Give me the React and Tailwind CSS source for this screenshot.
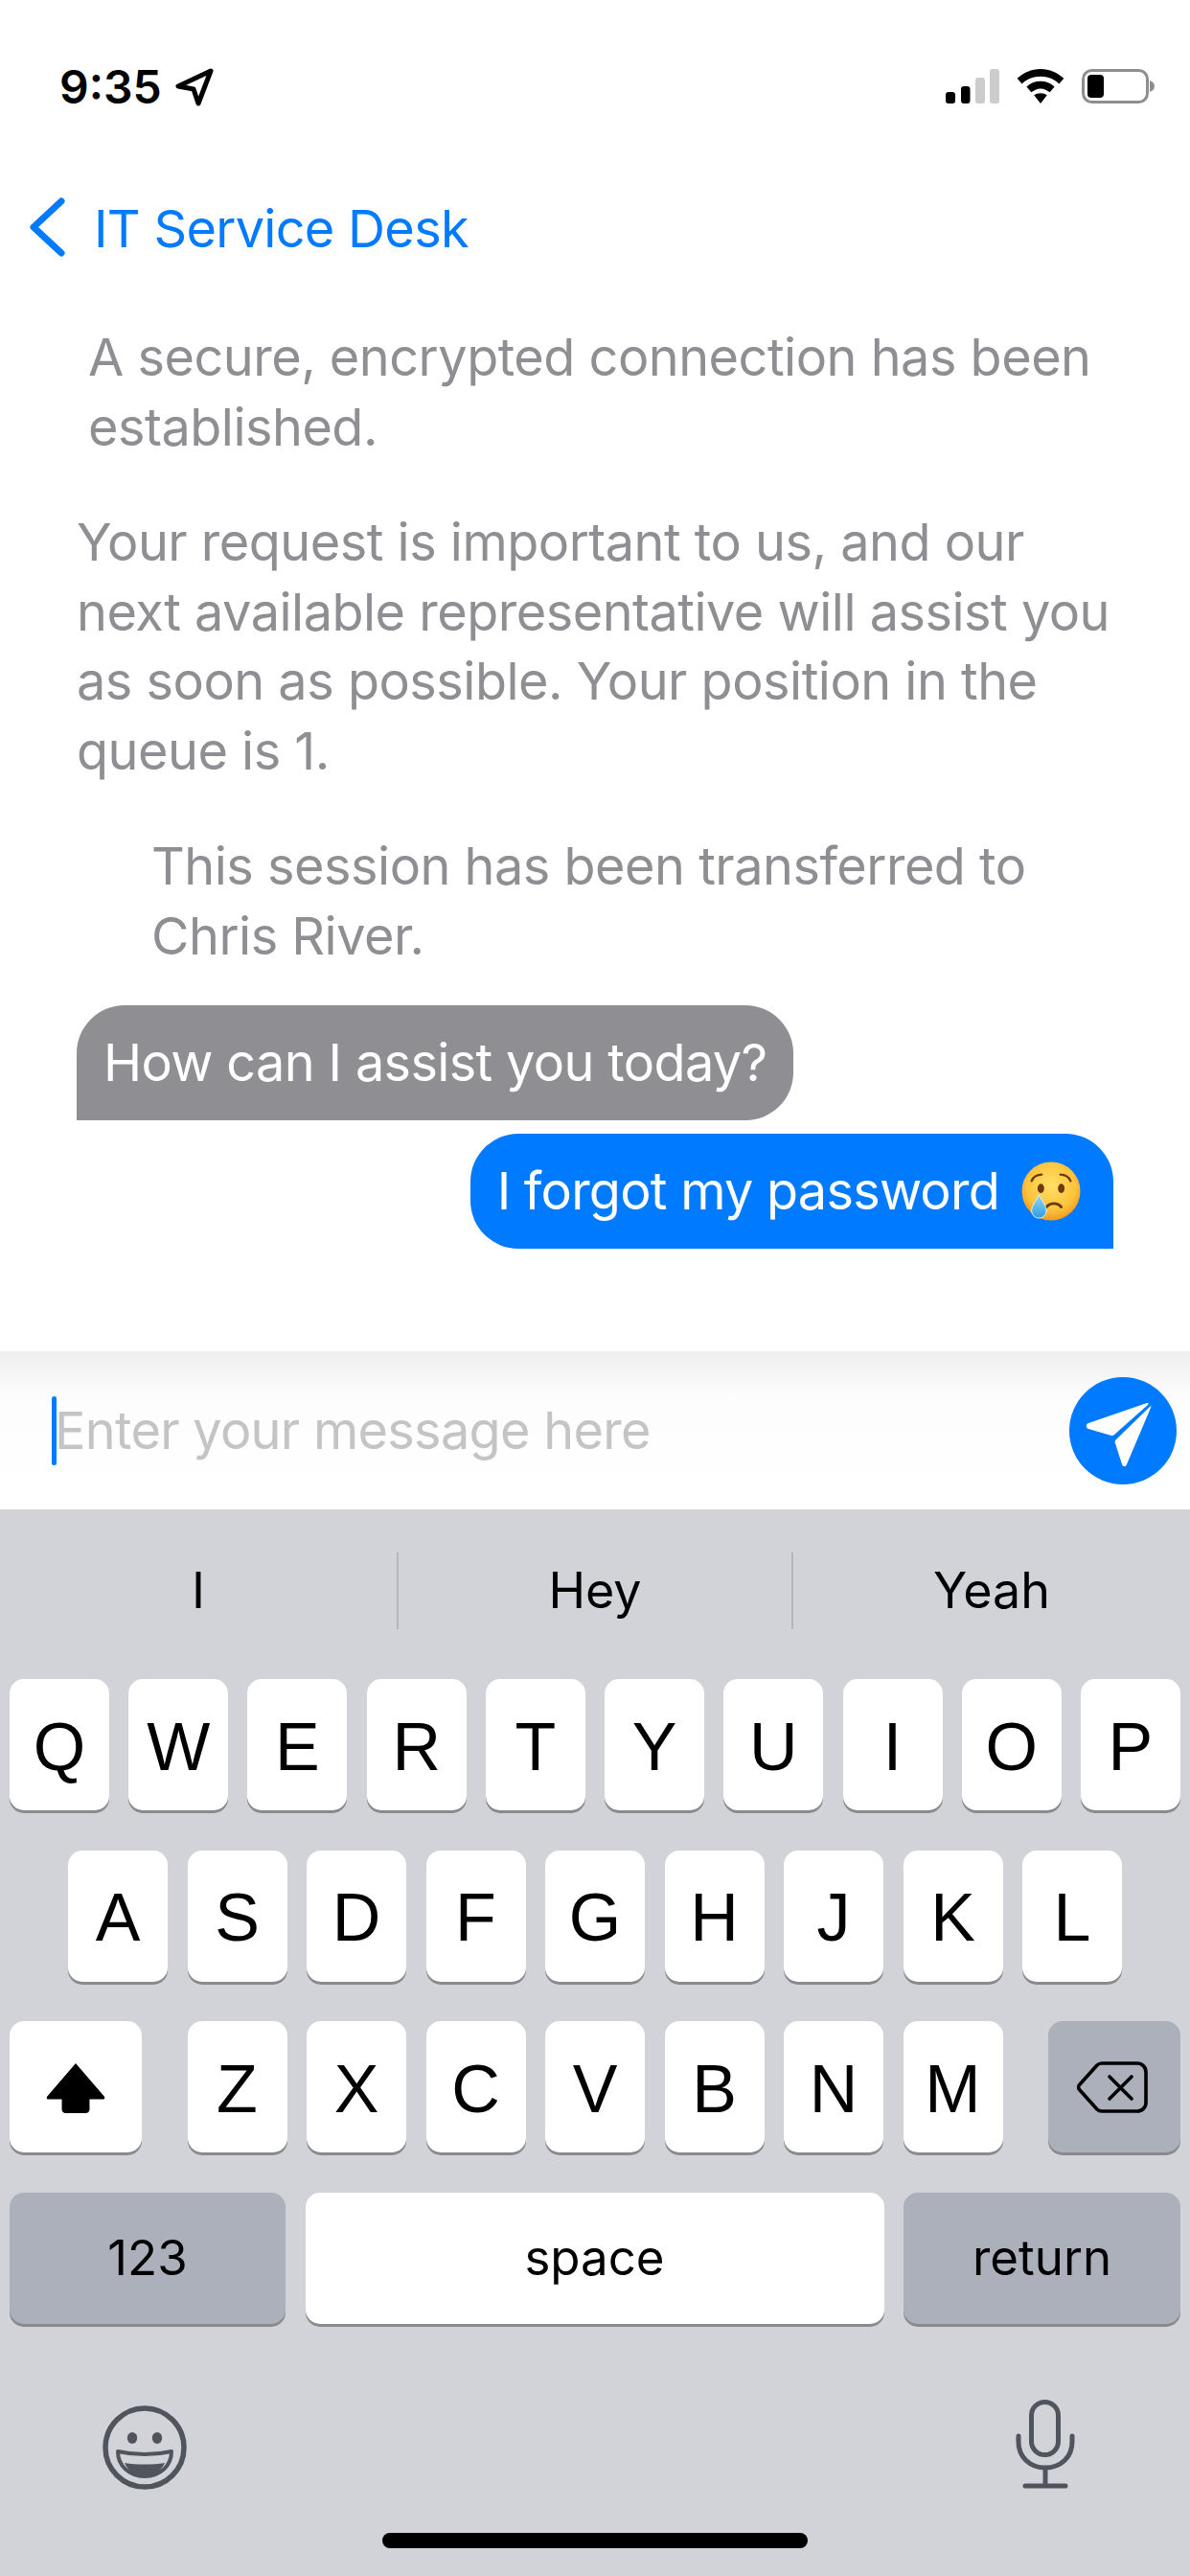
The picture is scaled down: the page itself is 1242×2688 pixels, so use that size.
import React from 'react';

const font = 'font-["Inter","Liberation_Sans",sans-serif]';

const rowOne = ['Q', 'W', 'E', 'R', 'T', 'Y', 'U', 'I', 'O', 'P'];
const rowTwo = ['A', 'S', 'D', 'F', 'G', 'H', 'J', 'K', 'L'];
const rowThree = ['Z', 'X', 'C', 'V', 'B', 'N', 'M'];

const Key = ({ children, className = 'w-[104px] bg-white' }) => (
  <div className={`h-[137px] rounded-[15px] shadow-[0_3px_0_#898a8d] flex items-center justify-center text-black ${className}`}>
    {children}
  </div>
);

const Letter = ({ children }) => (
  <Key>
    <span className='font-["Liberation_Sans",sans-serif] text-[70px] leading-none pt-[4px]'>{children}</span>
  </Key>
);

const StatusBar = () => (
  <div className="h-[172px] flex items-start justify-between pt-[61px] pl-[62px] pr-[37px]">
    <div className="flex items-center gap-[14px]">
      <span className="text-[48px] leading-[60px] font-semibold text-black">9:35</span>
      <svg width="40" height="40" viewBox="0 0 40 40" fill="none">
        <path d="M37 3 3 19l16 3 5 15z" stroke="#000" strokeWidth="5" strokeLinejoin="round" />
      </svg>
    </div>
    <div className="flex items-center gap-[18px] pt-[11px]">
      <svg width="56" height="36" viewBox="0 0 56 36">
        <rect x="0" y="24" width="10" height="12" rx="3" fill="#000" />
        <rect x="16" y="18" width="9.5" height="18" rx="3" fill="#000" />
        <rect x="31" y="9" width="10" height="27" rx="3" fill="#ccc" />
        <rect x="46" y="0" width="10" height="36" rx="3" fill="#ccc" />
      </svg>
      <svg width="50" height="36" viewBox="0 0 50 37">
        <path d="M25 0c10 0 18 4 25 10l-5 6c-5-5-12-8-20-8S10 11 5 16l-5-6C7 4 15 0 25 0z" fill="#000" />
        <path d="M25 13c6 0 11 2 15 6l-5 6c-3-2-6-4-10-4s-7 2-10 4l-5-6c4-4 9-6 15-6z" fill="#000" />
        <path d="M25 26c3 0 5 1 7 2l-7 9-7-9c2-1 4-2 7-2z" fill="#000" />
      </svg>
      <svg width="76" height="36" viewBox="0 0 76 36">
        <rect x="1.5" y="1.5" width="67" height="33" rx="9" fill="none" stroke="#8e8e8e" strokeWidth="3" />
        <rect x="6" y="6" width="17" height="24" rx="4" fill="#000" />
        <path d="M71 12c3 1 5 3 5 6s-2 5-5 6z" fill="#8e8e8e" />
      </svg>
    </div>
  </div>
);

const SadEmoji = () => (
  <svg width="62" height="62" viewBox="0 0 64 64" className="shrink-0">
    <defs>
      <radialGradient id="face" cx="50%" cy="40%" r="60%">
        <stop offset="0%" stopColor="#ffe066" />
        <stop offset="70%" stopColor="#fdc33c" />
        <stop offset="100%" stopColor="#f29a1f" />
      </radialGradient>
      <linearGradient id="tear" x1="0" y1="0" x2="0" y2="1">
        <stop offset="0%" stopColor="#8fd6f7" />
        <stop offset="100%" stopColor="#2f9de0" />
      </linearGradient>
    </defs>
    <circle cx="32" cy="32" r="31.5" fill="url(#face)" />
    <ellipse cx="21" cy="29" rx="3.6" ry="5" fill="#6b3a0e" />
    <ellipse cx="43" cy="29" rx="3.6" ry="5" fill="#6b3a0e" />
    <path d="M11 21c2-5 6-7 11-7M53 21c-2-5-6-7-11-7" stroke="#6b3a0e" strokeWidth="2.4" fill="none" strokeLinecap="round" />
    <path d="M27 49c4-5 12-5 16 0" stroke="#6b3a0e" strokeWidth="3" fill="none" strokeLinecap="round" />
    <path d="M19 36c3 6 8 12 8 17a8 8 0 0 1-16 0c0-5 5-11 8-17z" fill="url(#tear)" stroke="#dff3fc" strokeWidth="1" />
  </svg>
);

export default function App() {
  return (
    <div className={`w-[1242px] h-[2688px] bg-white overflow-hidden flex flex-col ${font}`}>
      <StatusBar />

      {/* nav */}
      <div className="h-[165px] flex items-start pl-[30px] pt-[34px] gap-[30px]">
        <svg width="38" height="62" viewBox="0 0 38 62" fill="none" className="shrink-0">
          <path d="M34 4 5 31l29 27" stroke="#007aff" strokeWidth="7" strokeLinecap="round" strokeLinejoin="round" />
        </svg>
        <span className="text-[54px] leading-[66px] tracking-[-0.7px] text-[#007aff]">IT Service Desk</span>
      </div>

      {/* messages */}
      <div className="h-[1073px] flex flex-col text-[54px] leading-[72.5px] tracking-[-0.5px] text-[#8e8e93]">
        <p className="pl-[92px] pr-[60px]">A secure, encrypted connection has been established.</p>
        <p className="pl-[80px] pr-[60px] mt-[48px]">Your request is important to us, and our next available representative will assist you as soon as possible. Your position in the queue is 1.</p>
        <p className="pl-[158px] pr-[100px] mt-[48px]">This session has been transferred to Chris River.</p>
        <div className="ml-[80px] mt-[36px] self-start h-[120px] bg-[#8e8e93] rounded-[50px] rounded-bl-none px-[28px] flex items-center text-white tracking-[-0.65px]">How can I assist you today?</div>
        <div className="mr-[80px] mt-[14px] self-end h-[120px] bg-[#007aff] rounded-[50px] rounded-br-none pl-[28px] pr-[34px] flex items-center gap-[23px] text-white tracking-[-0.75px]">
          I forgot my password
          <SadEmoji />
        </div>
      </div>

      {/* input */}
      <div className="h-[165px] bg-gradient-to-b from-[#eeeeef] via-[#fdfdfd] via-30% to-white flex items-center justify-between pl-[54px] pr-[14px]">
        <div className="flex items-center">
          <div className="w-[5px] h-[72px] rounded-full bg-[#007aff]" />
          <span className="-ml-[2px] text-[54px] tracking-[-0.7px] text-[#c4c4c6]">Enter your message here</span>
        </div>
        <div className="w-[112px] h-[112px] rounded-full bg-[#007aff] flex items-center justify-center">
          <svg width="112" height="112" viewBox="0 0 112 112">
            <path d="M81 27 20 48c-3 1-3 5 0 6l24 7c1 0 2 0 3-1l35-31c1-2 1-2-1-2z" fill="#fff" />
            <path d="M84 31 50 64c-2 2-3 3-2 5l7 22c1 3 4 3 5 0l25-59c1-2 0-2-1-1z" fill="#fff" />
          </svg>
        </div>
      </div>

      {/* keyboard */}
      <div className="flex-1 bg-[#d1d3d9] flex flex-col">
        <div className="h-[177px] grid grid-cols-3 items-center text-[52px] text-black text-center pb-[8px]">
          <span>I</span>
          <span className="border-x-2 border-[#b4b6bc] h-[80px] leading-[80px]">Hey</span>
          <span>Yeah</span>
        </div>
        <div className="flex flex-col gap-[41.5px]">
          <div className="flex justify-between px-[10px]">
            {rowOne.map(k => <Letter key={k}>{k}</Letter>)}
          </div>
          <div className="flex justify-center gap-[20.5px]">
            {rowTwo.map(k => <Letter key={k}>{k}</Letter>)}
          </div>
          <div className="flex justify-between px-[10px]">
            <Key className="w-[138px] bg-white">
              <svg width="62" height="54" viewBox="0 0 64 56">
                <path d="M32 2 63 38c1 2 0 3-2 3H47v11c0 2-2 4-4 4H21c-2 0-4-2-4-4V41H3c-2 0-3-1-2-3z" fill="#000" />
              </svg>
            </Key>
            <div className="flex gap-[20.5px]">
              {rowThree.map(k => <Letter key={k}>{k}</Letter>)}
            </div>
            <Key className="w-[138px] bg-[#abb0bb]">
              <svg width="74" height="54" viewBox="0 0 74 54" fill="none" stroke="#000" strokeWidth="3.6" strokeLinejoin="round" strokeLinecap="round" className="-ml-[4px]">
                <path d="M26 2h37c5 0 9 4 9 9v32c0 5-4 9-9 9H26c-2 0-4-1-5-2L3 30c-2-2-2-4 0-6L21 4c1-1 3-2 5-2z" />
                <path d="M34 16l23 23M57 16 34 39" />
              </svg>
            </Key>
          </div>
          <div className="flex justify-between px-[10px] text-[51px]">
            <Key className="w-[288px] bg-[#abb0bb]">123</Key>
            <Key className="w-[604px] bg-white">space</Key>
            <Key className="w-[289px] bg-[#abb0bb]">return</Key>
          </div>
        </div>
        <div className="flex justify-between items-start pl-[107px] pr-[120px] mt-[79px]">
          <svg width="88" height="88" viewBox="0 0 88 88" className="mt-[6px]">
            <circle cx="44" cy="44" r="41" fill="none" stroke="#50545c" strokeWidth="5.5" />
            <ellipse cx="31" cy="34" rx="5.2" ry="6" fill="#50545c" />
            <ellipse cx="57" cy="34" rx="5.2" ry="6" fill="#50545c" />
            <path d="M16 48c18 4 38 4 56 0 0 15-12 26-28 26S16 63 16 48z" fill="none" stroke="#50545c" strokeWidth="4" strokeLinejoin="round" />
            <path d="M23 60c13 2 29 2 42 0-4 9-12 14-21 14s-17-5-21-14z" fill="#50545c" />
          </svg>
          <svg width="62" height="94" viewBox="0 0 62 94" fill="none" stroke="#50545c" strokeWidth="5" strokeLinecap="round">
            <rect x="16.5" y="2.5" width="28" height="55" rx="14" />
            <path d="M3 38v6c0 16 12 27 28 27s28-11 28-27v-6" />
            <path d="M31 71v19" strokeLinecap="butt" />
            <path d="M10 90h42" />
          </svg>
        </div>
        <div className="w-[444px] h-[16px] mt-[45px] mx-auto rounded-full bg-black" />
      </div>
    </div>
  );
}
